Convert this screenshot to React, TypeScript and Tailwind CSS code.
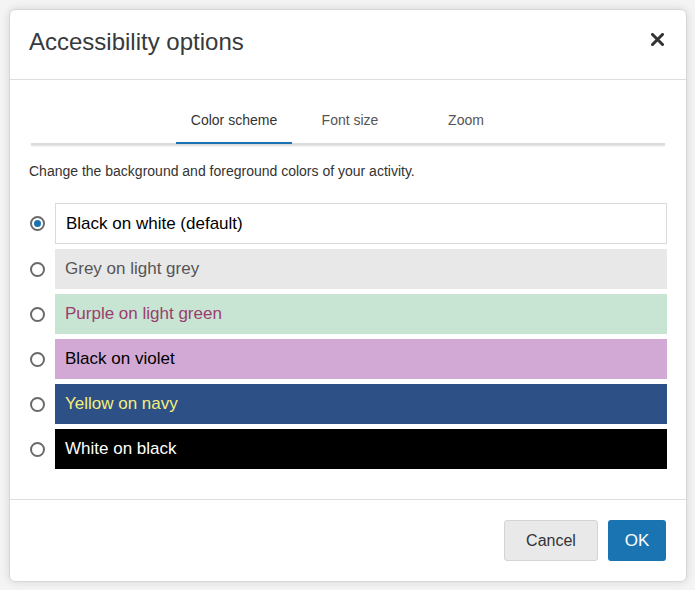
import { useState } from 'react';

const SCHEMES: { label: string; box: string; text: string }[] = [
  { label: 'Black on white (default)', box: 'h-[41px] bg-white border border-[#dadada]', text: 'text-black' },
  { label: 'Grey on light grey', box: 'h-[40px] bg-[#e8e8e8]', text: 'text-[#555555]' },
  { label: 'Purple on light green', box: 'h-[40px] bg-[#c8e4d3]', text: 'text-[#9b3d6d]' },
  { label: 'Black on violet', box: 'h-[40px] bg-[#d2a9d5]', text: 'text-black' },
  { label: 'Yellow on navy', box: 'h-[40px] bg-[#2d5086]', text: 'text-[#f3ef7c]' },
  { label: 'White on black', box: 'h-[40px] bg-black', text: 'text-white' },
];

const TABS = ['Color scheme', 'Font size', 'Zoom'];

export default function App() {
  const [scheme, setScheme] = useState(0);
  const [tab, setTab] = useState(0);

  return (
    <div className="w-[695px] h-[590px] bg-[#f4f4f4] pt-[9px] pl-[9px] font-['Liberation_Sans',Arial,sans-serif]">
      <div className="w-[678px] h-[573px] bg-white rounded-md border border-[#d6d6d6] shadow-[0_0_10px_rgba(0,0,0,0.12)] flex flex-col">
        {/* header */}
        <div className="flex items-start justify-between border-b border-[#dedede] pl-[19px] pr-[19px] pt-[17px] pb-[23px]">
          <h2 className="text-[24px] leading-[29px] text-[#373a3c]">Accessibility options</h2>
          <button className="mt-[4px] mr-px p-0.5" aria-label="Close">
            <svg width="13" height="13" viewBox="0 0 13 13">
              <path d="M1.5 1.5 L11.5 11.5 M11.5 1.5 L1.5 11.5" stroke="#333" strokeWidth="3" strokeLinecap="square" />
            </svg>
          </button>
        </div>

        {/* body */}
        <div className="flex-1 px-[19px] pt-[18px]">
          <div className="mx-[2px]">
            <div className="relative z-10 flex justify-center pl-[4px]">
              {TABS.map((t, i) => (
                <button
                  key={t}
                  onClick={() => setTab(i)}
                  className={`w-[116px] pt-3 pb-3 text-[14px] leading-5 border-b-2 ${
                    tab === i ? 'border-[#1b72b0] text-[#333]' : 'border-transparent text-[#555]'
                  }`}
                >
                  {t}
                </button>
              ))}
            </div>
            <div className="-mt-px h-[2px] bg-[#dcdcdc] shadow-[0_1px_2px_rgba(0,0,0,0.15)]" />
          </div>

          <p className="mt-[16px] text-[14px] leading-5 text-[#333]">
            Change the background and foreground colors of your activity.
          </p>

          <div className="mt-[22px] flex flex-col gap-[5px]">
            {SCHEMES.map((s, i) => (
              <label key={s.label} className="flex items-center gap-[10px] cursor-pointer">
                <span className="ml-px w-[15px] h-[15px] rounded-full border-2 border-[#6a6a6a] flex items-center justify-center shrink-0">
                  {scheme === i && <span className="w-[7px] h-[7px] rounded-full bg-[#1b72b0]" />}
                </span>
                <input type="radio" className="hidden" checked={scheme === i} onChange={() => setScheme(i)} />
                <span className={`flex-1 flex items-center pl-[10px] text-[17px] ${s.box} ${s.text}`}>
                  {s.label}
                </span>
              </label>
            ))}
          </div>
        </div>

        {/* footer */}
        <div className="border-t border-[#dedede] flex justify-end gap-[10px] pt-[20px] pb-[20px] pr-[20px]">
          <button className="w-[94px] h-[41px] rounded-[3px] border border-[#d4d4d4] bg-[#e9e9e9] text-[16px] text-[#333]">
            Cancel
          </button>
          <button className="w-[58px] h-[41px] rounded-[3px] bg-[#1b74b2] text-[17px] text-white">OK</button>
        </div>
      </div>
    </div>
  );
}
